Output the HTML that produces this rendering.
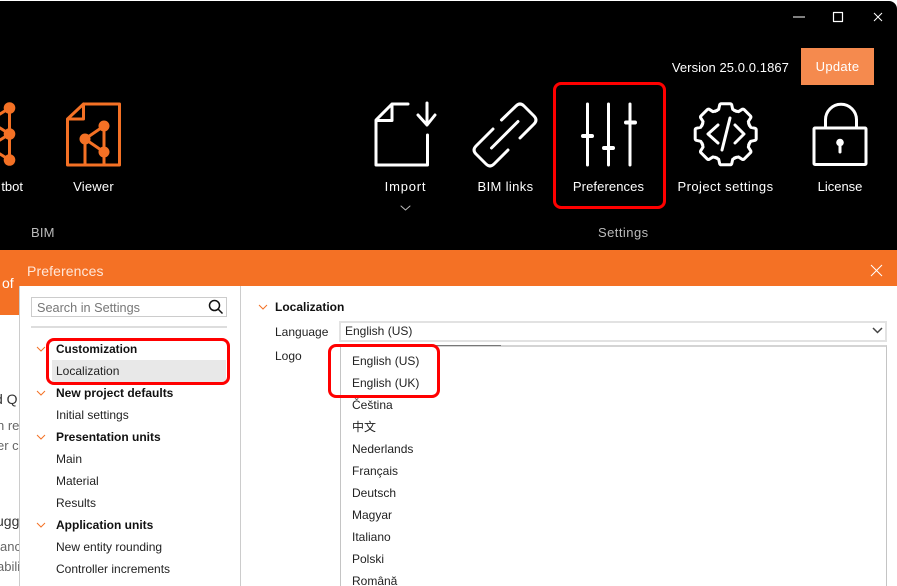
<!DOCTYPE html>
<html><head><meta charset="utf-8"><style>
html,body{margin:0;padding:0;background:#fff}
#p{position:relative;width:897px;height:586px;overflow:hidden;background:#fff;font-family:"Liberation Sans","Noto Sans CJK SC",sans-serif;font-size:12px;color:#222}
#p div{position:absolute;white-space:nowrap}
.t{height:22px;line-height:22px}
.b{font-weight:bold;color:#111}
.l{color:#fff;font-size:13px;line-height:18px;height:18px;text-align:center;top:178px}
.g{color:#666;font-size:13px;line-height:18px;height:18px}
.r{border:3px solid #f00;border-radius:8px;box-sizing:border-box}
</style></head><body><div id="p">
<div style="left:0;top:1px;width:897px;height:249px;background:#000;border-radius:0 8px 0 0"></div>
<div style="left:0;top:250px;width:897px;height:36px;background:#f47125"></div>
<div style="left:0;top:286px;width:19px;height:29px;background:#f47125"></div>

<svg style="position:absolute;left:0;top:0" width="897" height="250" fill="none" stroke-linecap="round" stroke-linejoin="round">
<g stroke="#fff" stroke-width="1">
<path d="M793 17H805" stroke-linecap="butt"/>
<rect x="833.5" y="12.5" width="9" height="9" stroke-width="1.2"/>
<path d="M874 13L882 21M882 13L874 21" stroke-linecap="butt"/>
</g>
<g stroke="#f47125" stroke-width="3">
<path d="M9.5 108V160M9.5 108L0 114M9.5 134L0 128M9.5 134L0 140M9.5 160L0 154"/>
<path d="M83.5 104H119.5V165H67.5V119L83.5 104V119H67.5"/>
<path d="M85 139L104 126V152L85 139V165M104 152V165"/>
</g>
<g fill="#f47125"><circle cx="9.5" cy="108" r="5.8"/><circle cx="9.5" cy="134" r="5.8"/><circle cx="9.5" cy="160" r="5.8"/><circle cx="104" cy="126" r="5.5"/><circle cx="85" cy="139" r="5.5"/><circle cx="104" cy="152" r="5.5"/></g>
<g stroke="#fff" stroke-width="3">
<path d="M408 104H392L376 120V165H427.5V135M392 104V120.500H376"/>
<path d="M427 103V125M418 115L427 125L435 115"/>
<path d="M501.500 120L516 106Q520 102 524 106L534 116Q538 120 534 124L520 138M508 150L494 164Q490 168 486 164L476 154Q472 150 476 146L493 129M491.500 148L518 121.500"/>
<path d="M587.500 104V165M608.500 104V165M630 104V165"/>
<path d="M583 136H592M604 148H613M626 122.500H635" stroke-width="4"/>
<g transform="translate(725.700 134.300)">
<path d="M-10.500 -23L-7 -25L-6 -29.500Q-5.500 -30.500 -4.500 -30.500H4.500Q5.500 -30.500 6 -29.500L7 -25L10.500 -23"/>
<path transform="rotate(45)" d="M-10.500 -23L-7 -25L-6 -29.500Q-5.500 -30.500 -4.500 -30.500H4.500Q5.500 -30.500 6 -29.500L7 -25L10.500 -23"/>
<path transform="rotate(90)" d="M-10.500 -23L-7 -25L-6 -29.500Q-5.500 -30.500 -4.500 -30.500H4.500Q5.500 -30.500 6 -29.500L7 -25L10.500 -23"/>
<path transform="rotate(135)" d="M-10.500 -23L-7 -25L-6 -29.500Q-5.500 -30.500 -4.500 -30.500H4.500Q5.500 -30.500 6 -29.500L7 -25L10.500 -23"/>
<path transform="rotate(180)" d="M-10.500 -23L-7 -25L-6 -29.500Q-5.500 -30.500 -4.500 -30.500H4.500Q5.500 -30.500 6 -29.500L7 -25L10.500 -23"/>
<path transform="rotate(225)" d="M-10.500 -23L-7 -25L-6 -29.500Q-5.500 -30.500 -4.500 -30.500H4.500Q5.500 -30.500 6 -29.500L7 -25L10.500 -23"/>
<path transform="rotate(270)" d="M-10.500 -23L-7 -25L-6 -29.500Q-5.500 -30.500 -4.500 -30.500H4.500Q5.500 -30.500 6 -29.500L7 -25L10.500 -23"/>
<path transform="rotate(315)" d="M-10.500 -23L-7 -25L-6 -29.500Q-5.500 -30.500 -4.500 -30.500H4.500Q5.500 -30.500 6 -29.500L7 -25L10.500 -23"/>
</g>
<path d="M718 125L708 134L718 143M735 125L744 134L735 143M730 118L722 150"/>
<rect x="814" y="128" width="52" height="36.500" rx="1"/>
<path d="M825.500 127V119.800A15.500 15.500 0 0 1 856.500 119.800V127"/>
<path d="M840 143V152" stroke-width="3"/>
</g>
<circle cx="840" cy="142.500" r="3.800" fill="#fff"/>
<path d="M401 206L405.500 210L410 206" stroke="#bbb" stroke-width="1"/>
</svg>

<div style="left:640px;top:59px;width:149px;text-align:right;color:#fff;font-size:13px;letter-spacing:.08px;line-height:18px">Version 25.0.0.1867</div>
<div style="left:801px;top:48px;width:73px;height:37px;background:#f58a4e;color:#fff;font-size:13px;letter-spacing:.3px;line-height:38px;text-align:center">Update</div>

<div class="l" style="left:-7px;width:30px;text-align:right">tbot</div>
<div class="l" style="left:53.500px;width:80px;letter-spacing:.2px">Viewer</div>
<div class="l" style="left:365.500px;width:80px;letter-spacing:.8px">Import</div>
<div class="l" style="left:465.500px;width:80px;letter-spacing:.35px">BIM links</div>
<div class="l" style="left:568.500px;width:80px;letter-spacing:.1px">Preferences</div>
<div class="l" style="left:665.500px;width:120px;letter-spacing:.45px">Project settings</div>
<div class="l" style="left:800px;width:80px">License</div>
<div style="left:31px;top:224px;color:#bbb;font-size:13px;letter-spacing:.2px;line-height:18px">BIM</div>
<div style="left:598px;top:224px;color:#bbb;font-size:13px;letter-spacing:.45px;line-height:18px">Settings</div>

<div style="left:2px;top:274px;color:#fff;font-size:14px;line-height:18px">of</div>
<div class="g" style="left:-5px;top:390px;width:24px;overflow:hidden;color:#333;font-size:14px">d Q</div>
<div class="g" style="left:-3px;top:417px;width:22px;overflow:hidden">n re</div>
<div class="g" style="left:-3px;top:437px;width:22px;overflow:hidden">er c</div>
<div class="g" style="left:-4px;top:512px;width:23px;overflow:hidden;color:#333;font-size:14px">ugg</div>
<div class="g" style="left:0;top:538px;width:19px;overflow:hidden">anc</div>
<div class="g" style="left:-3px;top:558px;width:22px;overflow:hidden">abili</div>

<div style="left:19px;top:286px;width:878px;height:300px;background:#fff"></div>
<div style="left:19px;top:286px;width:1px;height:300px;background:#ccc"></div>
<div style="left:240px;top:286px;width:1px;height:300px;background:#ccc"></div>
<div style="left:27px;top:261px;color:#ffe7d9;font-size:14px;letter-spacing:.1px;line-height:20px">Preferences</div>
<svg style="position:absolute;left:870px;top:264px" width="13" height="13" fill="none" stroke="#fff" stroke-width="1"><path d="M1 1L12 12M12 1L1 12"/></svg>

<div style="left:31px;top:297px;width:196px;height:20px;box-sizing:border-box;border:1px solid #ccc;color:#777;font-size:12.700px;line-height:20px;padding-left:5px">Search in Settings</div>
<svg style="position:absolute;left:207px;top:298px" width="18" height="18" fill="none" stroke="#111" stroke-width="1.500"><circle cx="7.500" cy="7.500" r="5"/><path d="M11 11L15.500 15.500"/></svg>
<div style="left:31px;top:326px;width:196px;height:2px;background:#ddd"></div>
<div style="left:52px;top:360px;width:174px;height:22px;background:#e8e8e8"></div>

<svg style="position:absolute;left:0;top:0" width="897" height="586" fill="none" stroke="#f47125" stroke-width="1">
<path d="M37 347L41 351L45 347M37 391L41 395L45 391M37 435L41 439L45 435M37 523L41 527L45 523M259 305L263 309L267 305"/>
</svg>
<div class="t b" style="left:56px;top:338px;font-size:11.800px">Customization</div>
<div class="t" style="left:56px;top:360px">Localization</div>
<div class="t b" style="left:56px;top:382px">New project defaults</div>
<div class="t" style="left:56px;top:404px">Initial settings</div>
<div class="t b" style="left:56px;top:426px">Presentation units</div>
<div class="t" style="left:56px;top:448px">Main</div>
<div class="t" style="left:56px;top:470px">Material</div>
<div class="t" style="left:56px;top:492px">Results</div>
<div class="t b" style="left:56px;top:514px">Application units</div>
<div class="t" style="left:56px;top:536px">New entity rounding</div>
<div class="t" style="left:56px;top:558px">Controller increments</div>

<div class="t b" style="left:275px;top:296px">Localization</div>
<div class="t" style="left:275px;top:321px">Language</div>
<div class="t" style="left:275px;top:345px">Logo</div>
<div style="left:339px;top:321px;width:548px;height:21px;box-sizing:border-box;border:2px solid #e2e2e2;line-height:17px;padding-left:4px">English (US)</div>
<svg style="position:absolute;left:872px;top:327px" width="11" height="8" fill="none" stroke="#444" stroke-width="1.500"><path d="M1 1L5.500 5.500L10 1"/></svg>

<div style="left:340px;top:345px;width:547px;height:241px;box-sizing:border-box;border-left:1px solid #c4c4c4;border-right:1px solid #c4c4c4;border-top:2px solid #d4d4d4;background:#fff"></div>
<div style="left:340px;top:345px;width:161px;height:1px;background:#777"></div>
<div class="t" style="left:352px;top:350px">English (US)</div>
<div class="t" style="left:352px;top:372px">English (UK)</div>
<div class="t" style="left:352px;top:394px">Čeština</div>
<div class="t" style="left:352px;top:416px">中文</div>
<div class="t" style="left:352px;top:438px">Nederlands</div>
<div class="t" style="left:352px;top:460px">Français</div>
<div class="t" style="left:352px;top:482px">Deutsch</div>
<div class="t" style="left:352px;top:504px">Magyar</div>
<div class="t" style="left:352px;top:526px">Italiano</div>
<div class="t" style="left:352px;top:548px">Polski</div>
<div class="t" style="left:352px;top:570px">Română</div>

<div class="r" style="left:553px;top:82px;width:113px;height:127px"></div>
<div class="r" style="left:46px;top:338px;width:184px;height:47px"></div>
<div class="r" style="left:328px;top:344px;width:112px;height:54px"></div>
</div></body></html>
